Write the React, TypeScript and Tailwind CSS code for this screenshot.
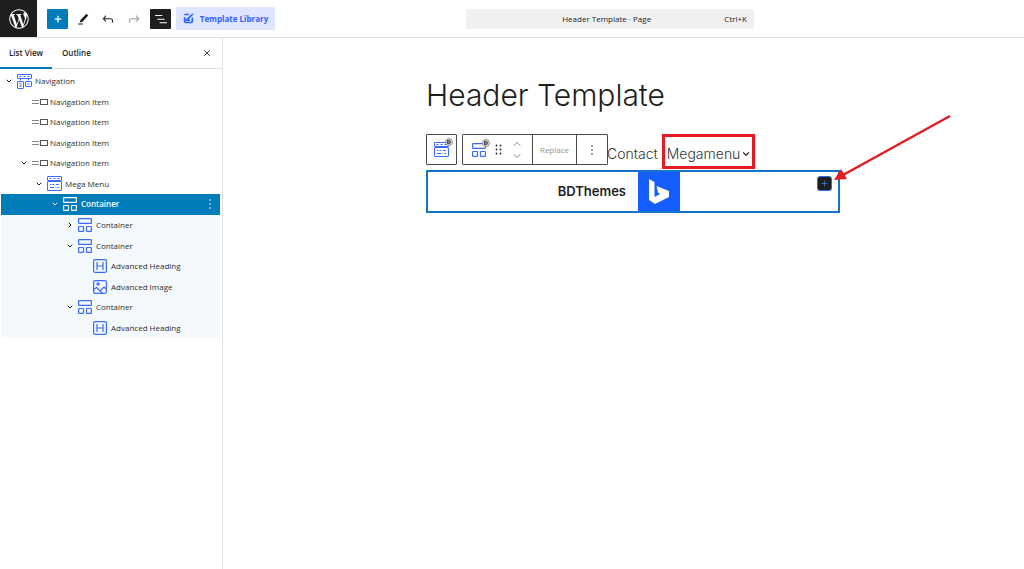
import type { ReactNode } from "react";
import { FaWordpressSimple } from "react-icons/fa";
import { ChevronDown, ChevronRight, ChevronUp, Plus, X } from "lucide-react";

type IconProps = { className?: string };

function ContainerIcon({ className = "h-[14px] w-[14px]" }: IconProps) {
  return (
    <svg viewBox="0 0 14 14" className={className} fill="none" stroke="currentColor" strokeWidth="1.2">
      <rect x="0.6" y="0.6" width="12.8" height="4.8" rx="0.6" />
      <rect x="0.6" y="8.5" width="4.9" height="4.9" rx="0.6" />
      <rect x="8.5" y="8.5" width="4.9" height="4.9" rx="0.6" />
    </svg>
  );
}

function MegaMenuIcon({ className = "h-[15px] w-[15px]" }: IconProps) {
  return (
    <svg viewBox="0 0 15 15" className={className} fill="none" stroke="currentColor">
      <rect x="0.5" y="0.5" width="14" height="4" rx="0.4" />
      <path d="M2.5 2.5h2M6.5 2.5h2M10.5 2.5h2" />
      <rect x="0.5" y="5.5" width="14" height="9" rx="0.4" />
      <path d="M3 8.5h1.5M5.5 8.5h2M9 8.5h3M3 11.5h4M8.5 11.5h1M10.5 11.5h1.5" />
    </svg>
  );
}

function NavigationIcon({ className = "h-[15px] w-[15px]" }: IconProps) {
  return (
    <svg viewBox="0 0 15 15" className={className} fill="none" stroke="currentColor">
      <rect x="0.5" y="0.5" width="14" height="4" rx="0.4" />
      <path d="M2.5 2.5h2M6.5 2.5h2M10.5 2.5h2M3.5 4.5v2M11.5 4.5v2" />
      <rect x="0.5" y="7.5" width="6" height="7" rx="0.4" />
      <rect x="8.5" y="7.5" width="6" height="5" rx="0.4" />
      <path d="M2.3 9.8h2.4M2.3 12h2.4M10.3 10h2.4" />
    </svg>
  );
}

function NavigationItemIcon() {
  return (
    <svg viewBox="0 0 16 8" className="h-2 w-4" fill="none" stroke="#555">
      <path d="M0 2.5h7M0 5.5h7" stroke="#888" />
      <rect x="8.5" y="1.5" width="7" height="5" />
    </svg>
  );
}

function HeadingIcon() {
  return (
    <svg viewBox="0 0 14 14" className="h-[14px] w-[14px]" fill="none" stroke="currentColor" strokeWidth="1.2">
      <rect x="0.6" y="0.6" width="12.8" height="12.8" rx="1.5" />
      <path d="M4 3v8M10 3v8M4 7h6" />
    </svg>
  );
}

function ImageIcon() {
  return (
    <svg viewBox="0 0 14 14" className="h-[14px] w-[14px]" fill="none" stroke="currentColor" strokeWidth="1.2">
      <rect x="0.6" y="0.6" width="12.8" height="12.8" rx="1.5" />
      <circle cx="5" cy="4" r="1.2" />
      <path d="M0.8 9.5 3.5 7.5l6 5.8M7 11l4-4 2.5 2.5" />
    </svg>
  );
}

function PencilIcon() {
  return (
    <svg viewBox="0 0 12 12" className="h-3 w-3" fill="#1e1e1e">
      <path d="M9.4 0.8 11.2 2.6 5.6 8.8 2.8 9.6 3.4 7zM1 10.4h5v1.1H1z" />
    </svg>
  );
}

function UndoIcon() {
  return (
    <svg viewBox="0 0 24 24" className="h-4 w-4" fill="currentColor">
      <path d="M18.3 11.7c-.6-.6-1.4-.9-2.3-.9H6.7l2.9-3.3-1.1-1-4.5 5L8.5 16l1-1-2.7-2.7H16c.5 0 .9.2 1.3.5 1 1 1 3.4 1 4.5v.3h1.5v-.2c0-1.5 0-4.3-1.5-5.7z" />
    </svg>
  );
}

function RedoIcon() {
  return (
    <svg viewBox="0 0 24 24" className="h-4 w-4" fill="currentColor">
      <path d="M15.6 6.5l-1.1 1 2.9 3.3H8c-.9 0-1.7.3-2.3.9-1.4 1.5-1.4 4.2-1.4 5.6v.2h1.5v-.3c0-1.1 0-3.5 1-4.5.3-.3.7-.5 1.3-.5h9.2L14.5 15l1.1 1.1 4.6-4.6-4.6-5z" />
    </svg>
  );
}

function LibraryIcon() {
  return (
    <svg viewBox="0 0 12 12" className="h-[11px] w-[11px]" fill="none" stroke="currentColor" strokeWidth="1.8">
      <path d="M1.5 1.6h5M1.8 4.4v4a2 2 0 0 0 2 2h4.4a2 2 0 0 0 2-2V4.8M3.2 8.4 10.8 1M4.5 8l3.2-.3" />
    </svg>
  );
}

function DotsIcon() {
  return (
    <svg viewBox="0 0 4 12" className="h-3 w-1" fill="currentColor">
      <circle cx="2" cy="2" r="0.8" />
      <circle cx="2" cy="6" r="0.8" />
      <circle cx="2" cy="10" r="0.8" />
    </svg>
  );
}

function BadgeIcon() {
  return (
    <svg viewBox="0 0 8 8" className="absolute -top-1 -right-1 h-2 w-2">
      <circle cx="4" cy="4" r="3.5" fill="#ddd" stroke="#777" strokeWidth="0.7" />
      <path d="M2.5 2.4h2.2L5.6 4l-.9 1.6H2.5zM3 4h2" fill="none" stroke="#333" strokeWidth="0.9" />
    </svg>
  );
}

type Row = {
  label: string;
  indent: string;
  icon: ReactNode;
  arrow?: "open" | "closed";
  state?: "selected" | "child";
};

const rows: Row[] = [
  { label: "Navigation", indent: "pl-1", icon: <NavigationIcon />, arrow: "open" },
  { label: "Navigation Item", indent: "pl-[19px]", icon: <NavigationItemIcon /> },
  { label: "Navigation Item", indent: "pl-[19px]", icon: <NavigationItemIcon /> },
  { label: "Navigation Item", indent: "pl-[19px]", icon: <NavigationItemIcon /> },
  { label: "Navigation Item", indent: "pl-[19px]", icon: <NavigationItemIcon />, arrow: "open" },
  { label: "Mega Menu", indent: "pl-[34px]", icon: <MegaMenuIcon />, arrow: "open" },
  { label: "Container", indent: "pl-[50px]", icon: <ContainerIcon />, arrow: "open", state: "selected" },
  { label: "Container", indent: "pl-[65px]", icon: <ContainerIcon />, arrow: "closed", state: "child" },
  { label: "Container", indent: "pl-[65px]", icon: <ContainerIcon />, arrow: "open", state: "child" },
  { label: "Advanced Heading", indent: "pl-20", icon: <HeadingIcon />, state: "child" },
  { label: "Advanced Image", indent: "pl-20", icon: <ImageIcon />, state: "child" },
  { label: "Container", indent: "pl-[65px]", icon: <ContainerIcon />, arrow: "open", state: "child" },
  { label: "Advanced Heading", indent: "pl-20", icon: <HeadingIcon />, state: "child" },
];

const rowStyles = {
  plain: "text-[#3b6cf6]",
  selected: "bg-[#007cba] text-white",
  child: "bg-[#f3f9fc] text-[#3b6cf6]",
};

function TreeRow({ label, indent, icon, arrow, state }: Row) {
  const selected = state === "selected";
  return (
    <li className={`flex items-center ${rowStyles[state ?? "plain"]}`}>
      <button className={`flex min-w-0 flex-1 items-center ${indent}`}>
        <span className={`flex w-3 shrink-0 ${selected ? "text-white" : "text-[#1e1e1e]"}`}>
          {arrow === "open" && <ChevronDown size={8} strokeWidth={3} />}
          {arrow === "closed" && <ChevronRight size={8} strokeWidth={3} />}
        </span>
        <span className="flex w-[18px] shrink-0 items-center">{icon}</span>
        <span className={selected ? "font-semibold text-white" : "text-[#2f2f2f]"}>{label}</span>
      </button>
      {selected && (
        <button aria-label="Options" className="px-2">
          <DotsIcon />
        </button>
      )}
    </li>
  );
}

function TopBar() {
  return (
    <header className="flex h-[38px] items-center border-b border-[#e0e0e0]">
      <a href="#dashboard" aria-label="Dashboard" className="flex h-[37px] w-[37px] items-center justify-center bg-[#1e1e1e] text-white">
        <FaWordpressSimple size={20} />
      </a>
      <div className="flex flex-1 items-center pl-[10px]">
        <button aria-label="Add block" className="flex h-5 w-[21px] items-center justify-center rounded-[1px] bg-[#007cba] text-white">
          <Plus size={10} strokeWidth={3} />
        </button>
        <button aria-label="Tools" className="ml-[9px]">
          <PencilIcon />
        </button>
        <button aria-label="Undo" className="ml-[11px] text-[#1e1e1e]">
          <UndoIcon />
        </button>
        <button aria-label="Redo" className="ml-[10px] text-[#999]">
          <RedoIcon />
        </button>
        <button aria-label="Document overview" className="ml-2 flex h-5 w-[21px] items-center justify-center rounded-[1px] bg-[#1e1e1e] text-white">
          <svg viewBox="0 0 24 24" className="h-4 w-4" fill="currentColor">
            <path d="M3 6h11v1.5H3V6Zm3.5 5.5h11V13h-11v-1.5ZM21 17H10v1.5h11V17Z" />
          </svg>
        </button>
        <button className="ml-[5px] flex h-[23px] w-[99px] items-center justify-center gap-1.5 rounded-[1px] bg-[#dfe5ff] font-bold text-[#2f62ff]">
          <LibraryIcon />
          Template Library
        </button>
      </div>
      <button className="mr-[270px] flex h-5 w-72 items-center rounded-[2px] bg-[#f0f0f0] px-[7px] text-[#1e1e1e]">
        <span className="flex-1 pl-4 text-center">Header Template · Page</span>
        <span>Ctrl+K</span>
      </button>
    </header>
  );
}

function ListView() {
  return (
    <aside className="w-[223px] shrink-0 border-r border-[#e0e0e0]">
      <div className="flex h-[31px] items-stretch border-b border-[#e0e0e0] font-semibold text-[#1e1e1e]">
        <button className="-mb-px border-b-2 border-[#007cba] px-[9px]">List View</button>
        <button className="px-[10px]">Outline</button>
        <button aria-label="Close" className="mr-[10px] ml-auto">
          <X size={10} strokeWidth={2} />
        </button>
      </div>
      <ul className="mt-[2px] mr-[2px] ml-px grid h-[267px] auto-rows-fr">
        {rows.map((row, i) => (
          <TreeRow key={i} {...row} />
        ))}
      </ul>
    </aside>
  );
}

function BlockToolbar() {
  return (
    <div className="flex gap-[5px] text-[#3b6cf6]">
      <button aria-label="Select parent block" className="flex h-[31px] w-[31px] items-center justify-center rounded-[1px] border border-[#4a4a4a] bg-white">
        <span className="relative">
          <MegaMenuIcon />
          <BadgeIcon />
        </span>
      </button>
      <div className="flex h-[31px] w-[146px] rounded-[1px] border border-[#4a4a4a] bg-white">
        <div className="flex flex-1 items-center justify-center gap-[9px]">
          <button aria-label="Container" className="relative">
            <ContainerIcon />
            <BadgeIcon />
          </button>
          <button aria-label="Drag">
            <svg viewBox="0 0 7 11" className="h-[11px] w-[7px]" fill="#1e1e1e">
              <circle cx="1.5" cy="1.5" r="0.9" />
              <circle cx="5.5" cy="1.5" r="0.9" />
              <circle cx="1.5" cy="5.5" r="0.9" />
              <circle cx="5.5" cy="5.5" r="0.9" />
              <circle cx="1.5" cy="9.5" r="0.9" />
              <circle cx="5.5" cy="9.5" r="0.9" />
            </svg>
          </button>
          <span className="flex flex-col text-[#888]">
            <button aria-label="Move up">
              <ChevronUp size={12} />
            </button>
            <button aria-label="Move down">
              <ChevronDown size={12} />
            </button>
          </span>
        </div>
        <button className="w-[45px] border-x border-[#4a4a4a] text-[#949494]">Replace</button>
        <button aria-label="Options" className="flex w-[30px] items-center justify-center text-[#1e1e1e]">
          <DotsIcon />
        </button>
      </div>
    </div>
  );
}

function Canvas() {
  return (
    <main className="min-w-0 flex-1 pt-[39px] pl-[19px] font-['Inter',sans-serif] text-[#1e1e1e]">
      <div className="relative mx-auto w-[414px]">
        <h1 className="text-[30px] leading-9 font-light whitespace-nowrap">Header Template</h1>
        <div className="mt-[21px] flex h-9 items-start">
          <div className="font-['Open_Sans',sans-serif]">
            <BlockToolbar />
          </div>
          <nav className="flex text-[14px] leading-[30px] font-light whitespace-nowrap text-[#333]">
            <a href="#contact" className="mt-[5px] -ml-px">Contact</a>
            <a href="#megamenu" className="ml-1 flex h-[35px] items-center border-[3px] border-[#e51b23] pt-[5px] pr-px pl-[2px]">
              Megamenu
              <ChevronDown size={10} strokeWidth={3} className="ml-px" />
            </a>
          </nav>
        </div>
        <section className="flex h-[43px] items-stretch border-2 border-[#1573c9]">
          <div className="flex w-[210px] items-center justify-end pr-3 text-[13px] font-semibold">BDThemes</div>
          <div className="flex w-[42px] items-center justify-center bg-[#155dfc]">
            <svg viewBox="0 0 20 25" className="h-[25px] w-5" fill="white">
              <path d="M0 0 5.5 3v15l5.8-3L9 13.8 7.5 7 20 12v6L6 25 0 21z" />
            </svg>
          </div>
          <div className="flex flex-1 items-start justify-end px-[6px] py-1">
            <button aria-label="Add block" className="flex h-[15px] w-[15px] items-center justify-center rounded-[3px] border border-[#2f6fed] bg-[#1e1e1e] text-[#3b82f6]">
              <Plus size={9} />
            </button>
          </div>
        </section>
        <svg viewBox="0 0 118 68" className="absolute top-[37px] left-[407px] h-[68px] w-[118px]">
          <path d="M117 2 10 61" stroke="#e51b23" strokeWidth="2.5" fill="none" />
          <path d="M1 66 8 55l6 10z" fill="#e51b23" />
        </svg>
      </div>
    </main>
  );
}

export default function App() {
  return (
    <div className="flex min-h-screen flex-col bg-white font-['Open_Sans','Noto_Sans',sans-serif] text-[8px]">
      <TopBar />
      <div className="flex flex-1">
        <ListView />
        <Canvas />
      </div>
    </div>
  );
}
